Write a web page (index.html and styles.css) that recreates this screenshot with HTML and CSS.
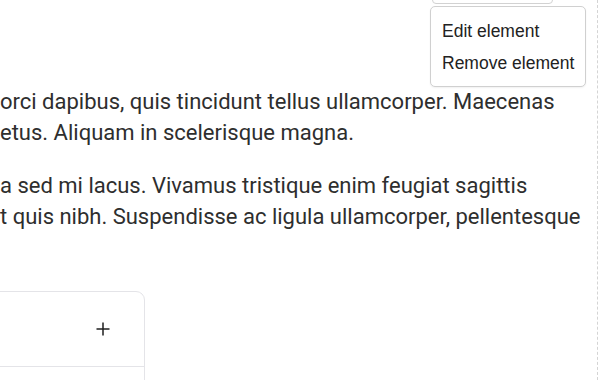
FILE: index.html
```html
<!DOCTYPE html>
<html>
<head>
<meta charset="utf-8">
<link rel="stylesheet" href="styles.css">
</head>
<body>
<div class="canvas">
  <div class="content">
    <p class="para">orci dapibus, quis tincidunt tellus ullamcorper. Maecenas<br>etus. Aliquam in scelerisque magna.</p>
    <p class="para">a sed mi lacus. Vivamus tristique enim feugiat sagittis<br>t quis nibh. Suspendisse ac ligula ullamcorper, pellentesque</p>
    <div class="card">
      <div class="card-head">
        <svg class="plus" width="14" height="14" viewBox="0 0 14 14"><path d="M7 0.5V13.5M0.5 7H13.5" stroke="#1f1f1f" stroke-width="1.5" fill="none"/></svg>
      </div>
      <div class="card-body"></div>
    </div>
  </div>
  <div class="toggle"></div>
  <div class="menu">
    <div class="menu-item">Edit element</div>
    <div class="menu-item">Remove element</div>
  </div>
</div>
</body>
</html>
```
FILE: styles.css
```css
html, body {
  margin: 0;
  padding: 0;
  background: #ffffff;
  overflow: hidden;
}
.canvas {
  position: relative;
  width: 615px;
  height: 380px;
  overflow: hidden;
}
.content {
  width: 598px;
  height: 380px;
  box-sizing: border-box;
  border-right: 1px dashed #d4d4d4;
  padding-top: 86px;
  font-family: Roboto, "Liberation Sans", sans-serif;
  font-size: 22px;
  line-height: 31px;
  color: #2e2e2e;
}
.para {
  margin: 0 0 22px 0;
  padding-left: 0;
  white-space: nowrap;
}
.card {
  margin-top: 59px;
  margin-left: -160px;
  width: 305px;
  border: 1px solid #e4e4e8;
  border-radius: 9px;
  box-sizing: border-box;
}
.card-head {
  height: 74px;
  border-bottom: 1px solid #e4e4e8;
  display: flex;
  align-items: center;
  justify-content: flex-end;
  padding-right: 34px;
}
.plus {
  display: block;
}
.card-body {
  height: 40px;
}
.toggle {
  position: absolute;
  left: 432px;
  top: -30px;
  width: 121px;
  height: 34px;
  box-sizing: border-box;
  border: 1px solid #d2d2d2;
  border-radius: 4px;
  background: #fff;
}
.menu {
  position: absolute;
  left: 430px;
  top: 6px;
  box-sizing: border-box;
  border: 1px solid #d0d0d0;
  border-radius: 5px;
  background: #ffffff;
  padding: 8px 0 7px 0;
  box-shadow: 0 1px 2px rgba(0,0,0,0.06);
  font-family: "Liberation Sans", Arial, sans-serif;
  font-size: 17.5px;
  line-height: 32px;
  color: #222222;
}
.menu-item {
  padding: 0 11px;
  white-space: nowrap;
}
```
